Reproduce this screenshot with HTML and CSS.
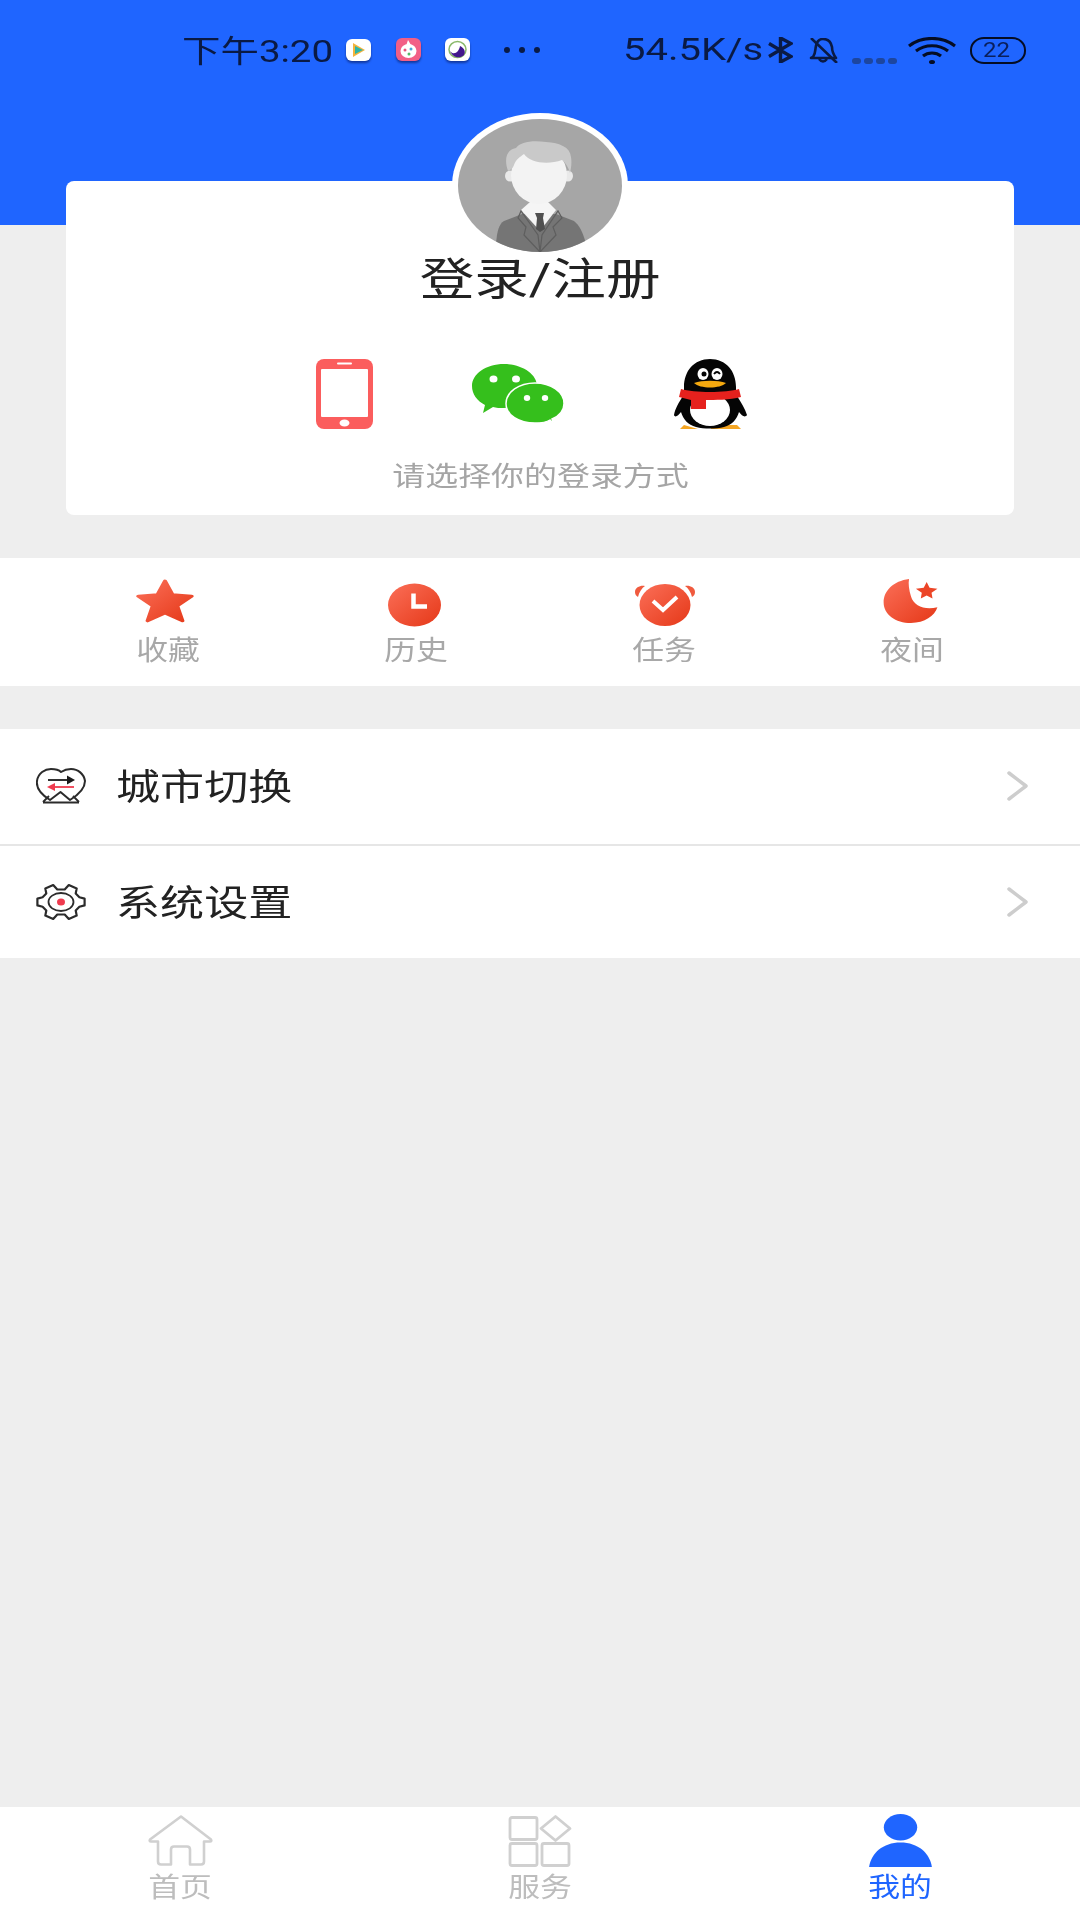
FILE: index.html
```html
<!DOCTYPE html>
<html lang="zh-CN">
<head>
    <meta charset="UTF-8">
    <meta name="viewport" content="width=device-width, initial-scale=1.0">
    <title>我的</title>
    <link rel="stylesheet" href="styles.css">
</head>
<body>
    <svg class="defs" width="0" height="0">
        <defs>
            <linearGradient id="red" x1="0" y1="0" x2="1" y2="1">
                <stop offset="0" stop-color="#fb6f58"/>
                <stop offset="1" stop-color="#e53818"/>
            </linearGradient>
        </defs>
    </svg>
    <div class="page">
        <div class="top">
            <div class="statusbar">
                <div class="sb-time"><span class="sb-text">下午3:20</span></div>
                <svg class="sb-app" viewBox="0 0 27 24">
                    <rect x="1" y="1" width="25" height="22" rx="6" fill="#fff"/>
                    <path d="M8 5 L20 12 L8 19 Z" fill="#f3b33d"/>
                    <path d="M10 8 L18 12 L10 16 Z" fill="#2bb3a8"/>
                </svg>
                <svg class="sb-app" viewBox="0 0 27 24">
                    <rect x="1" y="0" width="25" height="23" rx="6" fill="#f25f86"/>
                    <ellipse cx="13.5" cy="13" rx="8" ry="7" fill="#fff"/>
                    <path d="M13 2 L16 7 L11 8 Z" fill="#fff"/>
                    <circle cx="10" cy="12" r="1.5" fill="#e9557c"/>
                    <circle cx="16" cy="11" r="1.5" fill="#4aa8d8"/>
                    <circle cx="14" cy="16" r="1.5" fill="#55b96a"/>
                </svg>
                <svg class="sb-app" viewBox="0 0 27 24">
                    <rect x="1" y="0" width="25" height="23" rx="6" fill="#fff"/>
                    <ellipse cx="13.5" cy="11.5" rx="8.5" ry="8" fill="none" stroke="#8ab86a" stroke-width="1.5"/>
                    <path d="M6 13 C10 18 15 14 16 8 C20 10 22 13 20 17 C16 21 9 20 6 13 Z" fill="#43178c"/>
                </svg>
                <div class="sb-more"><i></i><i></i><i></i></div>
                <div class="sb-speed"><span class="sb-text">54.5K/s</span></div>
                <svg class="sb-bt" viewBox="0 0 25 26">
                    <path d="M1 6.500 L23 19.500 L12.500 25 V1 L23 6.500 L1 19.500" fill="none" stroke="#0a1a44" stroke-width="3.4"/>
                </svg>
                <svg class="sb-bell" viewBox="0 0 30 25">
                    <path d="M5 19 C8 15 7 11 8 8 C9 3 12 1 15 1 C20 1 23 4 24 9 C24 13 25 16 28 20 H3 Z" fill="none" stroke="#0a1a44" stroke-width="2.6" stroke-linejoin="round"/>
                    <path d="M11 21 Q15 26 19 21" fill="none" stroke="#0a1a44" stroke-width="2.6"/>
                    <path d="M3 0 L29 25" stroke="#0a1a44" stroke-width="2.6"/>
                </svg>
                <div class="sb-signal"><i></i><i></i><i></i><i></i></div>
                <svg class="sb-wifi" viewBox="0 0 48 27">
                    <path d="M1 9 C14 -1 34 -1 47 9" fill="none" stroke="#050d24" stroke-width="3.2"/>
                    <path d="M8 14 C17 7 31 7 40 14" fill="none" stroke="#050d24" stroke-width="3.2"/>
                    <path d="M15 19 C20 15 28 15 33 19" fill="none" stroke="#050d24" stroke-width="3.2"/>
                    <ellipse cx="24" cy="25" rx="3" ry="2" fill="#050d24"/>
                </svg>
                <div class="sb-battery"><span>22</span></div>
            </div>
        </div>

        <div class="card">
            <div class="avatar">
                <svg class="avatar-pic" viewBox="0 0 164 133" preserveAspectRatio="none">
                    <defs>
                        <clipPath id="avatar-clip"><ellipse cx="82" cy="66.5" rx="82" ry="66.5"/></clipPath>
                    </defs>
                    <g clip-path="url(#avatar-clip)">
                        <rect width="164" height="133" fill="#a6a6a6"/>
                        <path d="M38 125 C39 112 41 105 46 102 L64 95 H98 L116 102 C121 106 125 113 128 125 L110 140 H55 Z" fill="#757575"/>
                        <path d="M63 91 L72 83 H90 L98 91 L82 112 Z" fill="#f5f5f5"/>
                        <path d="M77 94 H86 L85 99 L87 110 L82 113 L78 110 L79 99 Z" fill="#505050"/>
                        <path d="M60 99 L63 92 L80 116 L82 133 L66 116 L68 108 Z M104 99 L100 92 L84 116 L82 133 L98 116 L95 108 Z" fill="none" stroke="#5e5e5e" stroke-width="1.2"/>
                        <ellipse cx="52" cy="57" rx="5" ry="5.5" fill="#e9e9e9"/>
                        <ellipse cx="110" cy="57" rx="5" ry="5.5" fill="#e9e9e9"/>
                        <ellipse cx="81" cy="56" rx="28" ry="29" fill="#f3f3f3"/>
                        <path d="M50 52 C46 40 48 31 58 29 C62 23 74 21 88 23 C102 24 112 28 113 38 C114 44 113 50 112 54 C110 48 108 44 104 41 C90 46 72 44 66 35 C62 38 58 40 56 46 C55 49 53 51 50 52 Z" fill="#c9c9c9"/>
                    </g>
                </svg>
            </div>
            <h1 class="login-title"><span class="wide">登录/注册</span></h1>
            <div class="login-ways">
                <svg class="way-phone" viewBox="0 0 57 70">
                    <rect width="57" height="70" rx="8" fill="#fb5d5d"/>
                    <rect x="5" y="10" width="47" height="48" rx="1" fill="#fff"/>
                    <rect x="21" y="3.500" width="15" height="2" rx="1" fill="#fff"/>
                    <ellipse cx="28.500" cy="64" rx="5" ry="3.500" fill="#fff"/>
                </svg>
                <svg class="way-wechat" viewBox="0 0 92 61">
                    <path d="M11 49 L13 41 C5 37 0 30 0 22 C0 10 14 0 32 0 C50 0 65 10 65 22 C65 34 50 44 32 44 C28 44 24 44 21 43 Z" fill="#35bf1c"/>
                    <path d="M82 61 L78 56 C75 58 69 59 63 59 C47 59 34 51 34 39.500 C34 28 47 19 63 19 C79 19 92 28 92 39.500 C92 47 87 52 80 55 Z" fill="#35bf1c" stroke="#fff" stroke-width="1.5"/>
                    <ellipse cx="21.500" cy="15" rx="4" ry="3.500" fill="#fff"/>
                    <ellipse cx="44" cy="15" rx="4" ry="3.500" fill="#fff"/>
                    <ellipse cx="55" cy="34" rx="3.200" ry="3" fill="#fff"/>
                    <ellipse cx="73" cy="34" rx="3.200" ry="3" fill="#fff"/>
                </svg>
                <svg class="way-qq" viewBox="0 0 73 70">
                    <path d="M10 66 L24 70 H6 Z M36 66 L63 66 L67 70 H37 Z" fill="#f5a623"/>
                    <path d="M36 0 C20 0 10 12 10 28 C10 32 10 34 9 37 C5 43 1 50 0 56 C1 59 4 57 7 53 C9 60 14 66 22 68 C30 70 42 70 50 68 C58 66 63 60 65 53 C68 57 71 59 73 56 C71 50 67 43 63 37 C62 34 62 32 62 28 C62 12 52 0 36 0 Z" fill="#050505"/>
                    <ellipse cx="36" cy="51" rx="20" ry="16" fill="#fff"/>
                    <ellipse cx="29" cy="15" rx="5.500" ry="6" fill="#fff"/>
                    <ellipse cx="43" cy="15" rx="5.500" ry="6" fill="#fff"/>
                    <circle cx="30" cy="15" r="2.500" fill="#050505"/>
                    <path d="M40 15 Q43 11 46 15" fill="none" stroke="#050505" stroke-width="1.800"/>
                    <path d="M20 24 C28 21 44 21 52 24 C46 30 26 30 20 24 Z" fill="#f5a90f"/>
                    <path d="M7 30 C20 34 52 34 65 30 L67 38 C56 41 40 41 32 41 V50 H17 V41 C13 40 9 39 5 38 Z" fill="#e5211d"/>
                </svg>
            </div>
            <p class="login-hint"><span class="wide">请选择你的登录方式</span></p>
        </div>

        <div class="tools">
            <div class="tool">
                <svg class="tool-star" viewBox="0 0 100 100" preserveAspectRatio="none">
                    <path d="M50 5 L63 36 L96 39 L71 61 L80 95 L50 77 L20 95 L29 61 L4 39 L37 36 Z" fill="url(#red)" stroke="url(#red)" stroke-width="7" stroke-linejoin="round"/>
                </svg>
                <span class="wide tool-label">收藏</span>
            </div>
            <div class="tool">
                <svg class="tool-clock" viewBox="0 0 53 43">
                    <ellipse cx="26.500" cy="21.500" rx="26.500" ry="21.500" fill="url(#red)"/>
                    <path d="M25.500 10 V23 H39" fill="none" stroke="#fff" stroke-width="4.500"/>
                </svg>
                <span class="wide tool-label">历史</span>
            </div>
            <div class="tool">
                <svg class="tool-alarm" viewBox="0 0 60 42">
                    <path d="M0 8 C0 3 6 1 10 2 C7 4 4 8 3 13 C1 12 0 10 0 8 Z" fill="#f05a3e"/>
                    <path d="M60 8 C60 3 54 1 50 2 C53 4 56 8 57 13 C59 12 60 10 60 8 Z" fill="#f05a3e"/>
                    <ellipse cx="30" cy="21" rx="25.500" ry="21" fill="url(#red)"/>
                    <path d="M18 17 L28 26 L42 13" fill="none" stroke="#fff" stroke-width="4"/>
                </svg>
                <span class="wide tool-label">任务</span>
            </div>
            <div class="tool">
                <svg class="tool-moon" viewBox="0 0 57 45">
                    <path d="M26 0 C10 2 0 12 0 24 C0 36 12 45 28 45 C42 45 52 38 55 29 C42 32 31 28 28 18 C26 11 25 5 26 0 Z" fill="url(#red)"/>
                    <path d="M44 3 L47 9 L55 10 L49 14 L50 20 L44 17 L38 20 L39 14 L33 10 L41 9 Z" fill="#ec4527"/>
                </svg>
                <span class="wide tool-label">夜间</span>
            </div>
        </div>

        <div class="menu">
            <div class="menu-row">
                <svg class="menu-icon" viewBox="0 0 50 38">
                    <path d="M14 33 C6 28 0 21 1 14 C2 6 9 2 15 2 C19 2 23 3 25 5 C28 3 31 2 35 2 C42 2 48 7 49 14 C49 21 42 28 34 33 L24.500 25 Z" fill="none" stroke="#2b2b2b" stroke-width="2" stroke-linejoin="round"/>
                    <path d="M7 35.500 H43 M7 35 L13 29 M43 35 L37 29" fill="none" stroke="#2b2b2b" stroke-width="1.800"/>
                    <path d="M12 13 H36" stroke="#1a1a1a" stroke-width="1.800"/>
                    <path d="M31 8.500 L39 13 L31 17.500 Z" fill="#1a1a1a"/>
                    <path d="M15 20 H38" stroke="#ef3b4f" stroke-width="1.800"/>
                    <path d="M19 16 L11 20 L19 24 Z" fill="#ef3b4f"/>
                </svg>
                <div class="menu-text"><span class="wide-left">城市切换</span></div>
                <svg class="menu-arrow" viewBox="0 0 21 30">
                    <path d="M2 2 L19 15 L2 28" fill="none" stroke="#cdcdcd" stroke-width="3.500" stroke-linecap="round" stroke-linejoin="round"/>
                </svg>
            </div>
            <div class="menu-row">
                <svg class="menu-icon" viewBox="0 0 50 38">
                    <path d="M48.600 22.400 L43.400 23.800 L39.700 27.500 L40.700 32.600 L32.800 36 L28.700 31.500 L21.300 31.500 L17.200 36 L9.300 32.600 L10.300 27.500 L6.600 23.800 L1.400 22.400 L1.400 15.600 L6.600 14.200 L10.300 10.500 L9.300 5.400 L17.200 2 L21.300 6.500 L28.700 6.500 L32.800 2 L40.700 5.400 L39.700 10.500 L43.400 14.200 L48.600 15.600 Z" fill="none" stroke="#2b2b2b" stroke-width="2.200" stroke-linejoin="round"/>
                    <ellipse cx="25" cy="19" rx="12.500" ry="9" fill="none" stroke="#2b2b2b" stroke-width="1.800"/>
                    <ellipse cx="25" cy="19" rx="4" ry="3.500" fill="#ef3b4f"/>
                </svg>
                <div class="menu-text"><span class="wide-left">系统设置</span></div>
                <svg class="menu-arrow" viewBox="0 0 21 30">
                    <path d="M2 2 L19 15 L2 28" fill="none" stroke="#cdcdcd" stroke-width="3.500" stroke-linecap="round" stroke-linejoin="round"/>
                </svg>
            </div>
        </div>

        <div class="tabbar">
            <div class="tab">
                <svg class="tab-icon" viewBox="0 0 65 52">
                    <path d="M33 2 L2 25 Q1 27 3 27 L10 27 V47 Q10 50 13 50 H23 V35 Q23 32 26 32 H39 Q42 32 42 35 V50 H53 Q56 50 56 47 V27 H62 Q64 27 63 25 Z" fill="none" stroke="#d0d0d0" stroke-width="2.600" stroke-linejoin="round"/>
                </svg>
                <span class="wide tab-label">首页</span>
            </div>
            <div class="tab">
                <svg class="tab-icon" viewBox="0 0 65 52">
                    <g fill="none" stroke="#d0d0d0" stroke-width="2.800">
                        <rect x="2" y="3" width="27" height="22" rx="2"/>
                        <rect x="2" y="29" width="27" height="22" rx="2"/>
                        <rect x="34" y="29" width="27" height="22" rx="2"/>
                        <path d="M47.500 2 L62 14 L47.500 26 L33 14 Z" stroke-linejoin="round"/>
                    </g>
                </svg>
                <span class="wide tab-label">服务</span>
            </div>
            <div class="tab active">
                <svg class="tab-icon" viewBox="0 0 64 54">
                    <ellipse cx="32" cy="13.500" rx="17" ry="13.500" fill="#1f65ff"/>
                    <path d="M0 54 C2 40 14 29 32 29 C50 29 62 40 64 54 Z" fill="#1f65ff"/>
                </svg>
                <span class="wide tab-label">我的</span>
            </div>
        </div>
    </div>
</body>
</html>
```

FILE: styles.css
```css
* {
    box-sizing: border-box;
}
body {
    margin: 0;
    background: #eeeeee;
    font-family: Roboto, "Noto Sans CJK SC", sans-serif;
}
.defs {
    display: block;
    height: 0;
}
.page {
    width: 1080px;
    height: 1920px;
    display: flex;
    flex-direction: column;
}
.wide {
    display: inline-block;
    transform: scaleX(1.18);
}
.wide-left {
    display: inline-block;
    transform: scaleX(1.225);
    transform-origin: left center;
}

/* status bar */
.top {
    height: 225px;
    background: #1f65ff;
    padding-top: 36px;
}
.statusbar {
    display: flex;
    align-items: center;
    height: 28px;
    padding-left: 182px;
    color: #0a1a44;
    font-size: 31px;
    white-space: nowrap;
}
.statusbar > * {
    flex: none;
}
.sb-text {
    display: inline-block;
    transform: scaleX(1.24);
    transform-origin: left center;
}
.sb-time {
    width: 163px;
    margin-top: -4px;
}
.sb-app {
    width: 27px;
    height: 24px;
    margin-right: 22.5px;
    filter: drop-shadow(0 2px 1px rgba(0, 0, 40, 0.45));
}
.sb-more {
    display: flex;
    gap: 9px;
    width: 119px;
    margin-left: 10px;
}
.sb-more i {
    width: 6px;
    height: 6px;
    border-radius: 50%;
    background: #0a1a44;
}
.sb-speed {
    width: 145px;
    margin-top: -2px;
}
.sb-speed .sb-text {
    transform: scaleX(1.29);
}
.sb-bt {
    width: 25px;
    height: 26px;
    margin-right: 15px;
}
.sb-bell {
    width: 30px;
    height: 25px;
    margin-right: 14px;
}
.sb-signal {
    display: flex;
    gap: 3px;
    width: 56px;
    padding-top: 22px;
}
.sb-signal i {
    width: 9px;
    height: 6px;
    border-radius: 3px;
    background: #1d469f;
}
.sb-wifi {
    width: 48px;
    height: 27px;
    margin-right: 14px;
}
.sb-battery {
    width: 56px;
    height: 27px;
    border: 2.5px solid #050d24;
    border-radius: 14px / 13px;
    color: #0a1f5c;
    font-size: 20px;
    line-height: 22px;
    padding-left: 11px;
}
.sb-battery span {
    display: inline-block;
    transform: scaleX(1.2);
    transform-origin: left center;
}

/* login card */
.card {
    height: 334px;
    margin: -44px 66px 0;
    background: #fff;
    border-radius: 8px;
    display: flex;
    flex-direction: column;
    align-items: center;
}
.avatar {
    width: 176px;
    height: 145px;
    margin-top: -68px;
    padding: 6px;
    background: #fff;
    border-radius: 50%;
    flex: none;
}
.avatar-pic {
    display: block;
    width: 164px;
    height: 133px;
}
.login-title {
    margin: -6px 0 0;
    height: 60px;
    font-size: 44px;
    font-weight: 400;
    line-height: 56px;
    color: #222;
    text-align: center;
}
.login-title .wide {
    transform: scaleX(1.24);
}
.login-ways {
    display: flex;
    align-items: center;
    margin: 47px 17px 0 0;
    height: 70px;
}
.way-phone {
    width: 57px;
    height: 70px;
}
.way-wechat {
    width: 92px;
    height: 61px;
    margin-left: 99px;
}
.way-qq {
    width: 73px;
    height: 70px;
    margin-left: 110px;
}
.login-hint {
    margin: 31px 0 0;
    font-size: 27px;
    line-height: 34px;
    color: #a5a5a5;
}
.login-hint .wide {
    transform: scaleX(1.22);
}

/* tools row */
.tools {
    height: 128px;
    margin-top: 43px;
    padding: 0 44px;
    background: #fff;
    display: grid;
    grid-template-columns: repeat(4, 1fr);
}
.tool {
    display: flex;
    flex-direction: column;
    align-items: center;
    height: 128px;
    padding-top: 21px;
}
.tool svg {
    height: 44px;
    flex: none;
}
.tool-star {
    width: 58px;
    margin-right: 6px;
}
.tool .tool-clock {
    width: 53px;
    margin: 4px 3px -4px 0;
}
.tool .tool-alarm {
    width: 60px;
    margin: 4px 0 -4px 2px;
}
.tool-moon {
    width: 57px;
    margin-right: 2px;
}
.tool-label {
    margin-top: 10px;
    font-size: 27px;
    line-height: 36px;
    color: #a8a8a8;
}

/* menu list */
.menu {
    margin-top: 43px;
    background: #fff;
}
.menu-row {
    height: 114.5px;
    display: flex;
    align-items: center;
    padding: 0 52px 0 36px;
}
.menu-row + .menu-row {
    border-top: 2px solid #e6e6e6;
}
.menu-icon {
    width: 50px;
    height: 38px;
    flex: none;
}
.menu-text {
    flex: 1;
    margin: -4px 0 0 30px;
    font-size: 36px;
    color: #222;
}
.menu-arrow {
    width: 21px;
    height: 30px;
    flex: none;
}

/* bottom tabs */
.tabbar {
    height: 113px;
    margin-top: auto;
    background: #fff;
    display: grid;
    grid-template-columns: repeat(3, 1fr);
}
.tab {
    display: flex;
    flex-direction: column;
    align-items: center;
    padding-top: 7px;
}
.tab-icon {
    width: 65px;
    height: 53px;
    flex: none;
}
.tab-label {
    margin-top: 3px;
    font-size: 27px;
    line-height: 36px;
    color: #bdbdbd;
}
.tab.active .tab-label {
    color: #1f65ff;
}
```
